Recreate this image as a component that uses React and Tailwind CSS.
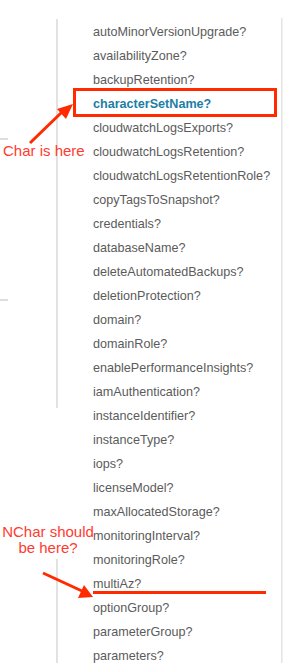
import React from 'react';

const props = [
    'autoMinorVersionUpgrade?',
    'availabilityZone?',
    'backupRetention?',
    'characterSetName?',
    'cloudwatchLogsExports?',
    'cloudwatchLogsRetention?',
    'cloudwatchLogsRetentionRole?',
    'copyTagsToSnapshot?',
    'credentials?',
    'databaseName?',
    'deleteAutomatedBackups?',
    'deletionProtection?',
    'domain?',
    'domainRole?',
    'enablePerformanceInsights?',
    'iamAuthentication?',
    'instanceIdentifier?',
    'instanceType?',
    'iops?',
    'licenseModel?',
    'maxAllocatedStorage?',
    'monitoringInterval?',
    'monitoringRole?',
    'multiAz?',
    'optionGroup?',
    'parameterGroup?',
    'parameters?',
];

const App = () => {
    return (
        <div className="relative w-[283px] h-[663px] overflow-hidden bg-white font-['Liberation_Sans',Arial,sans-serif]">
            <div className="flex h-full">
                {/* left gutter */}
                <div className="w-[58px] shrink-0 flex flex-col pt-[19px]">
                    <div className="h-[389px] flex flex-col border-r-2 border-[#e2e2e2]">
                        <div className="mt-[119px] w-[8px] h-[2px] bg-[#dedede]"></div>
                        <div className="mt-[159px] w-[8px] h-[2px] bg-[#dedede]"></div>
                    </div>
                    <div className="h-[151px]"></div>
                    <div className="flex-1 border-r-2 border-[#e2e2e2]"></div>
                </div>

                {/* property list */}
                <ul className="flex-1 pt-[20px] pl-[35px]">
                    {props.map((p) => (
                        <li
                            key={p}
                            className={
                                p === 'characterSetName?'
                                    ? 'h-[24px] leading-[24px] text-[12.6px] font-bold text-[#1c7ea6] whitespace-nowrap'
                                    : 'h-[24px] leading-[24px] text-[12.6px] text-[#5b5b5b] whitespace-nowrap'
                            }
                        >
                            {p}
                        </li>
                    ))}
                </ul>

                {/* right edge */}
                <div className="w-[2px] shrink-0 mt-[18px] bg-[#f1f1f1] border-l border-[#e4e4e4]"></div>
            </div>

            {/* annotations */}
            <div className="absolute left-[73px] top-[88px] w-[204px] h-[29px] border-[3px] border-[#ff2a00]"></div>
            <div className="absolute left-[3px] top-[142px] text-[15px] leading-[18px] text-[#ff3b30] whitespace-nowrap">Char is here</div>
            <div className="absolute left-[2px] top-[524px] w-[92px] text-center text-[15px] leading-[16px] text-[#ff3b30] whitespace-nowrap">
                NChar should
                <br />
                be here?
            </div>
            <div className="absolute left-[93px] top-[591px] w-[173px] h-[3px] bg-[#ff2a00]"></div>
            <svg className="absolute left-0 top-0" width="283" height="663">
                <line x1="30" y1="143" x2="62" y2="112" stroke="#ff2a00" strokeWidth="3" />
                <polygon points="73,104 66,119 57,109" fill="#ff2a00" />
                <line x1="43" y1="573" x2="82" y2="591" stroke="#ff2a00" strokeWidth="3" />
                <polygon points="93,597 78,598 84,585" fill="#ff2a00" />
            </svg>
        </div>
    );
};

export default App;
